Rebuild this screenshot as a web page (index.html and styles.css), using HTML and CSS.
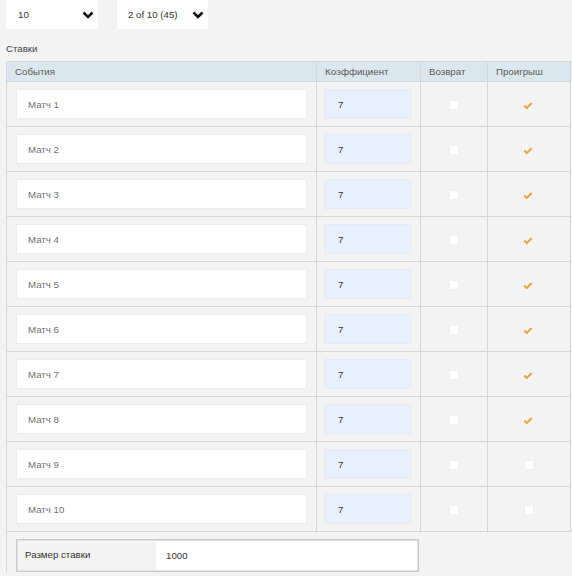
FILE: index.html
```html
<!DOCTYPE html>
<html lang="ru">
<head>
  <meta charset="UTF-8">
  <title>Ставки</title>
  <link rel="stylesheet" href="styles.css">
</head>
<body>
  <div class="toolbar">
    <div class="select select-size">
      <span>10</span>
      <svg class="chevron" viewBox="0 0 12 8" width="12" height="8"><polyline points="1.5,1.5 6,6 10.5,1.5"/></svg>
    </div>
    <div class="select select-page">
      <span>2 of 10 (45)</span>
      <svg class="chevron" viewBox="0 0 12 8" width="12" height="8"><polyline points="1.5,1.5 6,6 10.5,1.5"/></svg>
    </div>
  </div>

  <div class="section-title">Ставки</div>

  <div class="panel">
    <table class="bets">
      <colgroup>
        <col class="col-event">
        <col class="col-coef">
        <col class="col-back">
        <col class="col-lose">
      </colgroup>
      <thead>
        <tr>
          <th>События</th>
          <th>Коэффициент</th>
          <th>Возврат</th>
          <th>Проигрыш</th>
        </tr>
      </thead>
      <tbody id="rows"></tbody>
    </table>

    <div class="stake">
      <div class="stake-label">Размер ставки</div>
      <div class="stake-value">1000</div>
    </div>
  </div>

  <script>
    // 10 матчей, первые 8 отмечены как проигрыш
    const rows = document.getElementById("rows");
    const check = '<svg class="tick" viewBox="0 0 12 10" width="10" height="9"><polyline points="1.5,5 4.5,8 10.5,2"/></svg>';
    for (let i = 1; i <= 10; i++) {
      const tr = document.createElement("tr");
      const lost = i <= 8;
      tr.innerHTML =
        '<td class="cell-event"><div class="field">Матч ' + i + '</div></td>' +
        '<td class="cell-coef"><div class="field coef">7</div></td>' +
        '<td class="cell-mark"><span class="box"></span></td>' +
        '<td class="cell-mark">' + (lost ? check : '<span class="box"></span>') + '</td>';
      rows.appendChild(tr);
    }
  </script>
</body>
</html>
```

FILE: styles.css
```css
body {
  margin: 0;
  padding: 0 0 0 6px;
  background: #f3f3f3;
  font-family: "Liberation Sans", Arial, sans-serif;
  font-size: 9.7px;
  color: #555;
}
.toolbar {
  display: flex;
  gap: 19px;
  height: 30px;
}
.select {
  display: flex;
  align-items: center;
  justify-content: space-between;
  background: #fff;
  height: 29px;
  padding: 0 4px 0 12px;
  box-sizing: border-box;
  color: #333;
}
.select-size {
  width: 92px;
}
.select-page {
  width: 91px;
  padding-left: 11px;
}
.chevron polyline {
  fill: none;
  stroke: #111;
  stroke-width: 2.6;
}
.section-title {
  margin: 12px 0 5px 0;
  height: 14px;
  line-height: 14px;
  color: #444;
}
.panel {
  border-left: 1px solid #d6d6d6;
  width: 564px;
  box-sizing: border-box;
}
.bets {
  border-collapse: collapse;
  width: 564px;
  margin-left: -1px;
  table-layout: fixed;
}
.col-event { width: 310px; }
.col-coef { width: 104px; }
.col-back { width: 67px; }
.col-lose { width: 83px; }
.bets th {
  background: #dbe7ee;
  border: 1px solid #d3d8db;
  height: 19px;
  padding: 0 0 0 8px;
  text-align: left;
  font-weight: normal;
  color: #5a5a5a;
}
.bets td {
  border: 1px solid #d6d6d6;
  height: 45px;
  padding: 0;
  box-sizing: border-box;
  vertical-align: middle;
}
.bets td.cell-event { padding: 0 9px 0 9px; }
.bets td.cell-coef { padding: 0 9px 0 7px; }
.bets td.cell-mark { text-align: center; }
.field {
  height: 30px;
  line-height: 30px;
  padding-left: 11px;
  background: #fff;
  border: 1px solid #ececec;
  box-sizing: border-box;
  color: #707070;
}
.field.coef {
  background: #e8f0fe;
  border-color: #e4ebf5;
  padding-left: 13px;
  color: #333;
}
.box {
  display: inline-block;
  width: 8px;
  height: 8px;
  margin-top: 3px;
  background: #fff;
  border: 1px solid #f0f0f0;
}
.tick {
  margin: 5px 2px 0 0;
  filter: drop-shadow(0 0 2px #fff);
}
.tick polyline {
  fill: none;
  stroke: #e9a64b;
  stroke-width: 2.6;
}
.stake {
  display: flex;
  margin: 7px 0 0 9px;
  width: 403px;
  height: 33px;
  border: 1px solid #c9c9c9;
  box-shadow: inset 0 0 0 1px #e2e2e2;
  box-sizing: border-box;
}
.stake-label {
  width: 139px;
  padding-left: 8px;
  line-height: 30px;
  color: #333;
  box-sizing: border-box;
}
.stake-value {
  flex: 1;
  background: #fff;
  padding-left: 10px;
  line-height: 30px;
  margin: 1px 1px 1px 0;
  color: #333;
}
```
